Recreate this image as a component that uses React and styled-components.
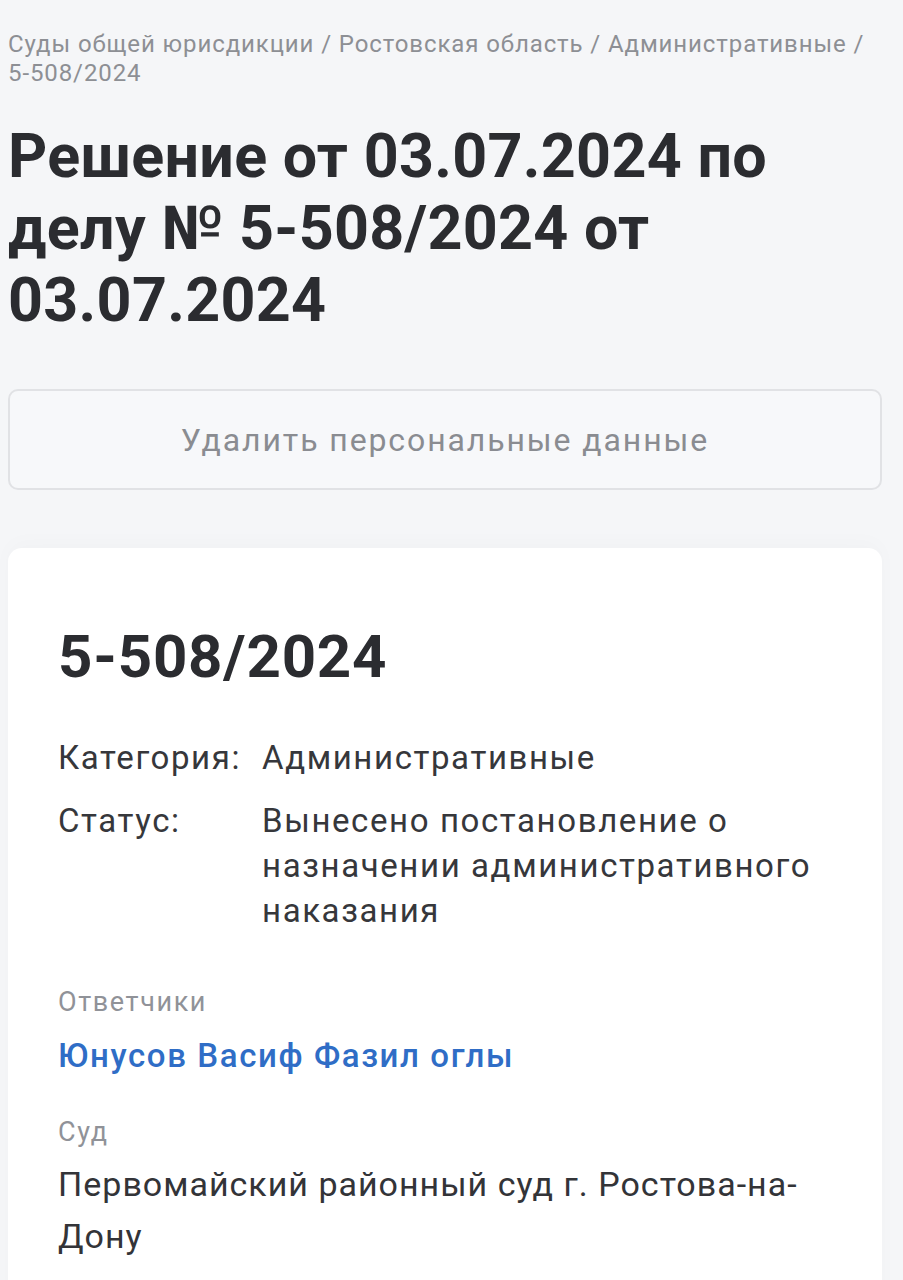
import React from "react";
import styled, { createGlobalStyle } from "styled-components";

const Global = createGlobalStyle`
  html, body { margin: 0; padding: 0; background: #f5f6f8; }
  body { font-family: Roboto, "Noto Sans", "Liberation Sans", sans-serif; -webkit-font-smoothing: antialiased; }
  * { box-sizing: border-box; }
`;

const Page = styled.div`
  min-height: 1280px;
  padding: 30px 21px 0 8px;
  display: flex;
  flex-direction: column;
  overflow: hidden;
`;

const Breadcrumbs = styled.nav`
  font-size: 24px;
  line-height: 29px;
  color: #8d8f94;
  letter-spacing: 0.9px;
`;

const Title = styled.h1`
  margin: 32px 0 0;
  font-size: 61px;
  line-height: 72px;
  font-weight: 700;
  color: #2b2c30;
  letter-spacing: 0.3px;
`;

const GhostButton = styled.button`
  margin-top: 53px;
  height: 101px;
  width: 100%;
  border: 2px solid #e1e2e5;
  border-radius: 10px;
  background: #f7f8fa;
  font-family: inherit;
  font-size: 32px;
  letter-spacing: 1.9px;
  color: #8a8c91;
  cursor: pointer;
`;

const Card = styled.section`
  margin-top: 58px;
  background: #ffffff;
  border-radius: 14px;
  padding: 76px 50px 60px 50px;
  min-height: 800px;
  box-shadow: 0 -6px 20px rgba(0, 0, 0, 0.02);
`;

const CaseNumber = styled.h2`
  margin: 0;
  font-size: 60px;
  line-height: 66px;
  font-weight: 700;
  color: #2b2c30;
  letter-spacing: 0.8px;
`;

const InfoGrid = styled.dl`
  margin: 45px 0 0;
  display: grid;
  grid-template-columns: 204px 1fr;
  row-gap: 18px;
  font-size: 33px;
  line-height: 45px;
  letter-spacing: 1.6px;
  color: #36373b;
`;

const Term = styled.dt`
  margin: 0;
`;

const Desc = styled.dd`
  margin: 0;
`;

const Section = styled.div`
  margin-top: ${(p) => p.$gap}px;
  display: flex;
  flex-direction: column;
  gap: ${(p) => p.$inner}px;
`;

const Label = styled.div`
  font-size: 27px;
  line-height: 32px;
  letter-spacing: 1.6px;
  color: #909298;
`;

const LinkText = styled.a`
  font-size: 33px;
  line-height: 40px;
  font-weight: 500;
  letter-spacing: 1.6px;
  color: #2f6dc6;
  text-decoration: none;
`;

const Value = styled.div`
  font-size: 34px;
  line-height: 52px;
  letter-spacing: 1px;
  color: #333438;
  max-width: 780px;
`;

export default function App() {
  return (
    <>
      <Global />
      <Page>
        <Breadcrumbs>
          Суды общей юрисдикции / Ростовская область / Административные / 5-508/2024
        </Breadcrumbs>
        <Title>Решение от 03.07.2024 по делу № 5-508/2024 от 03.07.2024</Title>
        <GhostButton>Удалить персональные данные</GhostButton>
        <Card>
          <CaseNumber>5-508/2024</CaseNumber>
          <InfoGrid>
            <Term>Категория:</Term>
            <Desc>Административные</Desc>
            <Term>Статус:</Term>
            <Desc>Вынесено постановление о назначении административного наказания</Desc>
          </InfoGrid>
          <Section $gap={53} $inner={18}>
            <Label>Ответчики</Label>
            <LinkText href="#">Юнусов Васиф Фазил оглы</LinkText>
          </Section>
          <Section $gap={40} $inner={10}>
            <Label>Суд</Label>
            <Value>Первомайский районный суд г. Ростова-на-Дону</Value>
          </Section>
        </Card>
      </Page>
    </>
  );
}
